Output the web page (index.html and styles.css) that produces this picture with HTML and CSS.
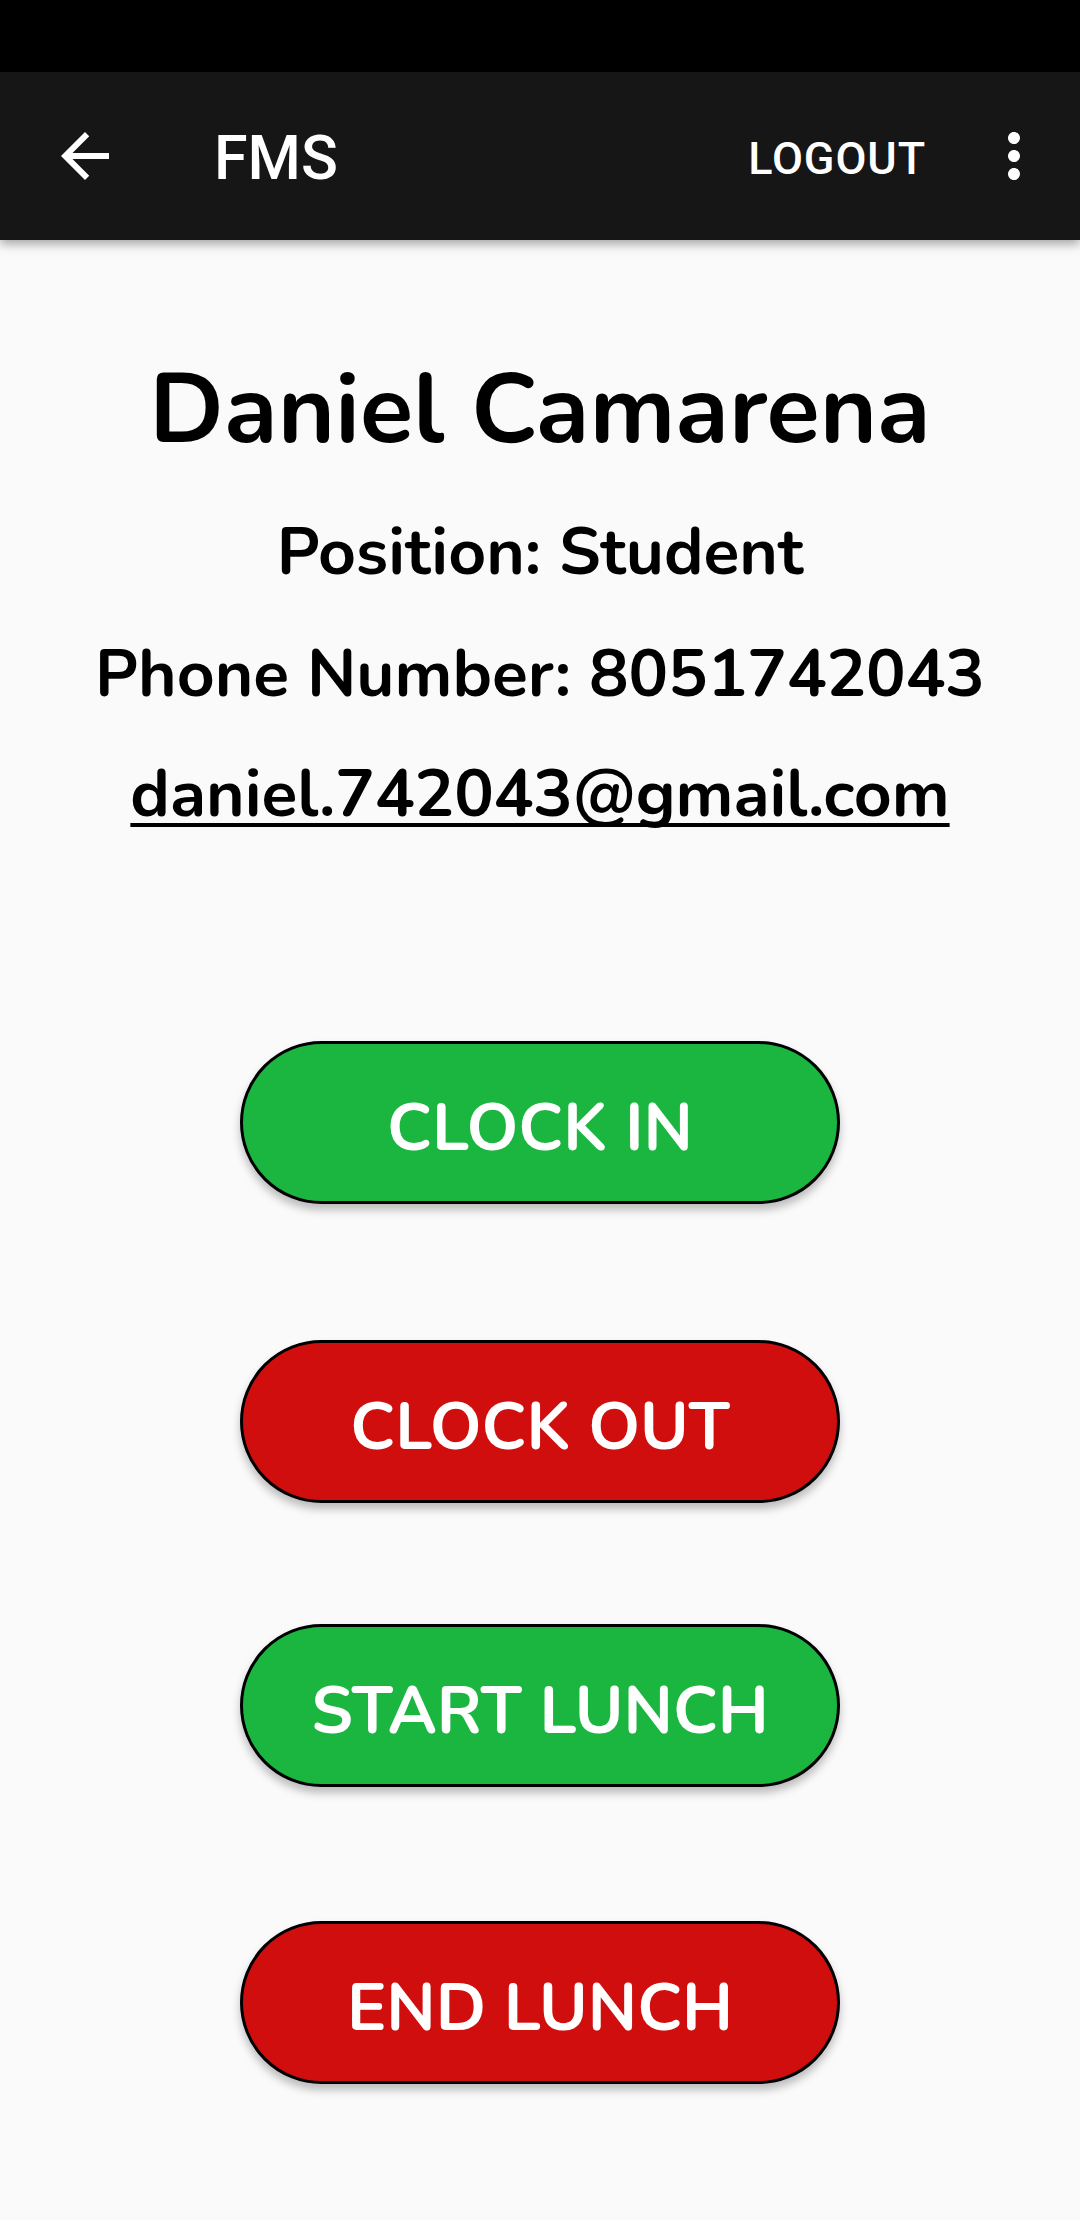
FILE: index.html
```html
<!DOCTYPE html>
<html>
<head>
<meta charset="utf-8">
<link rel="stylesheet" href="styles.css">
</head>
<body>
<div class="screen">
  <div class="statusbar"></div>
  <header class="toolbar">
    <svg class="icon back" viewBox="0 0 24 24" width="72" height="72"><path fill="#fff" d="M20 11H7.83l5.59-5.59L12 4l-8 8 8 8 1.41-1.41L7.83 13H20v-2z"/></svg>
    <div class="title">FMS</div>
    <div class="spacer"></div>
    <div class="action">LOGOUT</div>
    <svg class="icon more" viewBox="0 0 24 24" width="72" height="72"><path fill="#fff" d="M12 8c1.1 0 2-.9 2-2s-.9-2-2-2-2 .9-2 2 .9 2 2 2zm0 2c-1.1 0-2 .9-2 2s.9 2 2 2 2-.9 2-2-.9-2-2-2zm0 6c-1.1 0-2 .9-2 2s.9 2 2 2 2-.9 2-2-.9-2-2-2z"/></svg>
  </header>
  <main class="content">
    <h1 class="name">Daniel Camarena</h1>
    <p class="info">Position: Student</p>
    <p class="info">Phone Number: 8051742043</p>
    <p class="info email">daniel.742043@gmail.com</p>
    <div class="buttons">
      <div class="btn green btn-in">CLOCK IN</div>
      <div class="btn red btn-out">CLOCK OUT</div>
      <div class="btn green btn-start">START LUNCH</div>
      <div class="btn red btn-end">END LUNCH</div>
    </div>
  </main>
</div>
</body>
</html>
```

FILE: styles.css
```css
html, body {
  margin: 0;
  padding: 0;
  background: #fafafa;
}
.screen {
  width: 1080px;
  height: 2220px;
  overflow: hidden;
  background: #fafafa;
  display: flex;
  flex-direction: column;
}
.statusbar {
  height: 72px;
  background: #000;
  flex: none;
}
.toolbar {
  height: 168px;
  background: #161616;
  display: flex;
  align-items: center;
  box-shadow: 0 4px 10px rgba(0,0,0,0.35);
  position: relative;
  z-index: 1;
  flex: none;
  font-family: Roboto, "Liberation Sans", sans-serif;
  color: #fff;
}
.icon { display: block; flex: none; }
.back { margin-left: 49px; }
.title {
  margin-left: 93px;
  padding-top: 4px;
  font-size: 61px;
  font-weight: 500;
  line-height: 1;
}
.spacer { flex: 1; }
.action {
  padding-top: 4px;
  font-size: 45px;
  font-weight: 500;
  letter-spacing: 0.02em;
  line-height: 1;
  margin-right: 52px;
}
.more { margin-right: 30px; }
.content {
  flex: 1;
  display: flex;
  flex-direction: column;
  align-items: center;
  padding-top: 112px;
  font-family: "Nunito", Lato, "Open Sans", sans-serif;
  color: #000;
  text-align: center;
}
.name {
  margin: 0;
  font-size: 98px;
  font-weight: 700;
  line-height: 1.2;
}
.info {
  margin: 43px 0 0;
  font-size: 66px;
  font-weight: 700;
  line-height: 1.2;
}
.email {
  margin-top: 41px;
  text-decoration: underline;
  text-decoration-thickness: 4px;
  text-underline-offset: 7px;
  text-decoration-skip-ink: none;
}
.buttons {
  display: flex;
  flex-direction: column;
  align-items: center;
  margin-top: 207px;
}
.btn {
  box-sizing: border-box;
  width: 600px;
  height: 163px;
  padding-top: 10px;
  border: 3px solid #000;
  border-radius: 82px;
  display: flex;
  align-items: center;
  justify-content: center;
  color: #fff;
  font-size: 66px;
  font-weight: 700;
  line-height: 1;
  box-shadow: 0 6px 8px rgba(0,0,0,0.25);
}
.green { background: #1bb640; }
.red { background: #d00e0e; }
.btn-out { margin-top: 136px; }
.btn-start { margin-top: 121px; }
.btn-end { margin-top: 134px; }
```
